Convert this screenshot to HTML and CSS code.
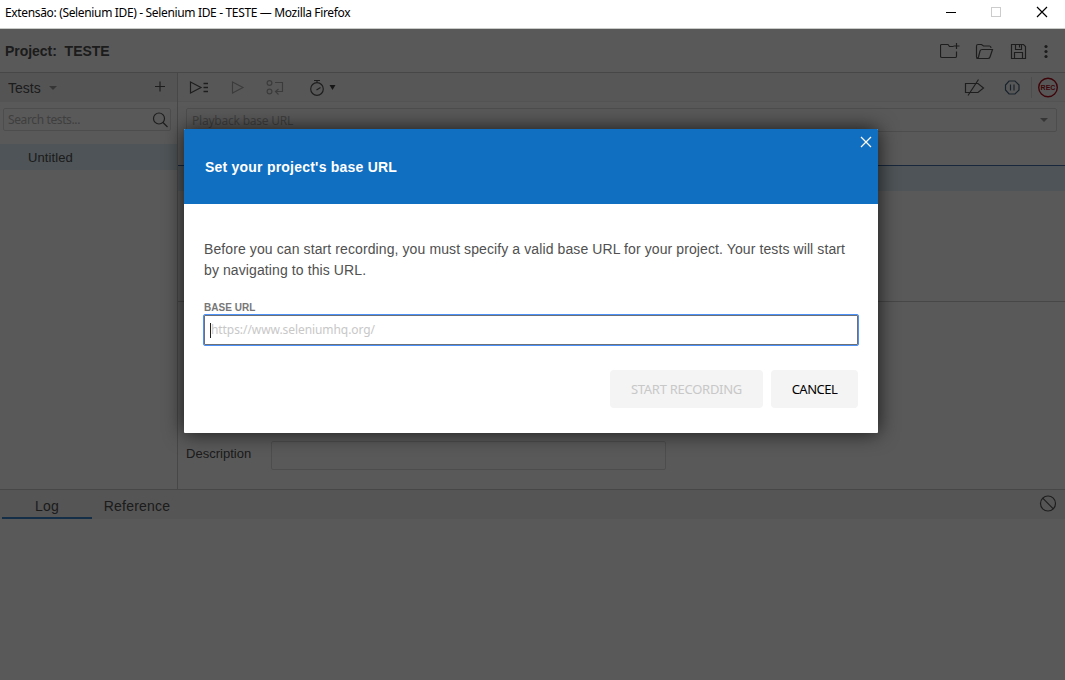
FILE: index.html
```html
<!DOCTYPE html>
<html lang="en">
<head>
<meta charset="utf-8">
<title>Selenium IDE - TESTE</title>
<link rel="stylesheet" href="styles.css">
</head>
<body>
<header class="titlebar">
  <span class="window-title">Extensão: (Selenium IDE) - Selenium IDE - TESTE — Mozilla Firefox</span>
  <svg class="window-controls" width="120" height="28" viewBox="0 0 120 28" fill="none" shape-rendering="crispEdges">
    <path d="M1 12.500H11" stroke="#000"/>
    <rect x="46.500" y="7.500" width="9" height="9" stroke="#ccc"/>
    <path d="M92 7L102 17M102 7L92 17" stroke="#000" stroke-width="1.200" shape-rendering="auto"/>
  </svg>
</header>
<div class="app">
  <div class="project">
    <span class="project-name">Project:&nbsp; TESTE</span>
    <svg width="120" height="24" viewBox="0 0 120 24" class="line-icons project-icons">
      <path d="M13.500 5.500H9.500L8 3.500H1.500Q.5 3.500 .5 5V15.500Q.5 16.500 2 16.500H15.500Q16.500 16.500 16.500 15V10.500M16.500 2V8M13.500 5H19.500"/>
      <path d="M36.500 16V5Q36.500 3.500 38 3.500H41.500L43.500 5H49.500Q51 5 51 7M38 17.500H48Q49.500 17.500 50 16L52.500 8.500H42Q40.500 8.500 40 10L38.500 16Q38 17.500 37 17.500L36.500 16"/>
      <path d="M71.500 3.500H83.500L85.500 5.500V17.500H71.500ZM74.500 17V11.500H82.500V17M75.500 4V8.500H81.500V4M79.500 4V6.500"/>
      <g class="dots"><circle cx="106" cy="5.500" r="1.600"/><circle cx="106" cy="10.500" r="1.600"/><circle cx="106" cy="15.500" r="1.600"/></g>
    </svg>
  </div>
  <div class="workspace">
    <aside class="sidebar">
      <div class="tests-head">
        <span>Tests</span><i class="caret"></i>
        <svg class="line-icons add" width="12" height="12" viewBox="0 0 12 12"><path d="M1 5.500H11M6 .5V10.500"/></svg>
      </div>
      <div class="search"><span class="search-hint">Search tests...</span>
        <svg class="line-icons" width="18" height="18" viewBox="0 0 18 18"><circle cx="7" cy="7.500" r="5.500"/><path d="M11 11.500L15.500 16"/></svg>
      </div>
      <div class="test-item">Untitled</div>
    </aside>
    <main class="editor">
      <div class="toolbar">
        <svg class="line-icons" width="160" height="28" viewBox="0 0 160 28">
          <path d="M2.500 9L13 14.500L2.500 20Z"/><path d="M15.500 10.500H20M15.500 14.500H20M15.500 18.500H20" stroke-width="1.500"/>
          <g class="disabled"><path d="M44.500 9L55 14.500L44.500 20Z"/><circle cx="81.500" cy="10" r="2.400"/><circle cx="81.500" cy="18.500" r="2.400"/><path d="M87 9.500H94.500V18.500H87.500M90.500 16L87.500 18.500L90.500 21.500"/></g>
          <circle cx="129" cy="16" r="6.300"/><path d="M126 7.500H132M129 8V9.500M128.500 17L132.500 14.500"/><path class="solid" d="M141.500 12H147.500L144.500 17Z"/>
        </svg>
        <svg class="line-icons" width="102" height="28" viewBox="0 0 102 28">
          <path d="M2.500 10.500H15L20.500 15L15 19.500H2.500ZM5 22.500L15.500 6.500"/>
          <path d="M46 8H52L56 12V17L52 21H46L42.500 17V12ZM47.500 11.500V17.500M51 11.500V17.500" class="pause"/>
          <path d="M68.500 4V25" class="divider"/>
          <circle cx="85" cy="14.500" r="9.300" class="record"/><text x="85" y="17" class="record-text">REC</text>
        </svg>
      </div>
      <div class="playback"><span class="playback-hint">Playback base URL</span><i class="caret"></i></div>
      <div class="commands"><div class="command-row"></div></div>
      <div class="details"><label class="description">Description</label><div class="description-input"></div></div>
    </main>
  </div>
  <nav class="tabs"><div class="tab active">Log</div><div class="tab reference">Reference</div>
    <svg class="line-icons" width="18" height="18" viewBox="0 0 18 18"><circle cx="9" cy="9.500" r="7.500"/><path d="M3.700 4.200L14.300 14.800"/></svg>
  </nav>
  <div class="log"></div>
  <div class="overlay">
    <section class="dialog">
      <div class="dialog-head"><h1>Set your project's base URL</h1>
        <svg class="close" width="12" height="12" viewBox="0 0 12 12"><path d="M1 1L11 11M11 1L1 11"/></svg>
      </div>
      <div class="dialog-body">
        <p>Before you can start recording, you must specify a valid base URL for your project. Your tests will start<br>by navigating to this URL.</p>
        <label class="field-label">BASE URL</label>
        <div class="url-input"><i class="cursor"></i><span class="url-hint">https://www.seleniumhq.org/</span></div>
        <div class="actions"><button class="start" disabled><span>START RECORDING</span></button><button class="cancel"><span>CANCEL</span></button></div>
      </div>
    </section>
  </div>
</div>
</body>
</html>
```
FILE: styles.css
```css
* { box-sizing: border-box; }
body { margin: 0; width: 1065px; height: 680px; overflow: hidden; background: #fff; font: 14px/20px "Liberation Sans", Arial, sans-serif; color: #505050; }
svg { display: block; flex: none; }
.titlebar { height: 29px; border-bottom: 1px solid #c9cbc9; display: flex; justify-content: space-between; }
.window-title { font: 12px/17px "Noto Sans", sans-serif; letter-spacing: -.345px; color: #000; padding: 4px 0 0 5px; white-space: nowrap; }
.app { position: relative; height: 651px; display: flex; flex-direction: column; }
.project { height: 44px; flex: none; border-bottom: 1px solid #ccc; display: flex; align-items: center; justify-content: space-between; padding-left: 5px; }
.project-name { font-weight: bold; font-size: 14px; letter-spacing: -.03px; }
.project-icons { margin: 4px 5px 0 0; }
.line-icons { fill: none; stroke: #555; stroke-width: 1.2; }
.dots { fill: #505050; stroke: none; }
.workspace { height: 416px; flex: none; display: flex; }
.sidebar { width: 178px; border-right: 1px solid #ccc; }
.tests-head { height: 29px; background: #f0f0f0; display: flex; align-items: center; padding: 1px 11px 0 8px; }
.caret { border: 4px solid transparent; border-top-color: #999; border-bottom: 0; margin-left: 8px; }
.tests-head .add { margin-left: auto; margin-bottom: 2px; }
.search { margin: 6px 6px 0 3px; height: 23px; border: 1px solid #ddd; border-radius: 2px; display: flex; align-items: center; justify-content: space-between; padding-left: 4px; font: 12px/18px "Noto Sans", sans-serif; letter-spacing: -.38px; color: #b4b4b4; }
.search-hint { padding-top: 1px; }
.test-item { height: 26px; margin-top: 13px; padding: 4px 0 0 28px; background: #dff0f9; font-size: 13px; letter-spacing: .1px; }
.editor { flex: 1; display: flex; flex-direction: column; }
.toolbar { height: 29px; flex: none; background: #fafafa; border-bottom: 1px solid #eee; display: flex; justify-content: space-between; padding-left: 10px; }
.disabled { stroke: #aaa; }
.solid { fill: #404040; stroke: none; }
.pause { stroke: #47637e; }
.divider { stroke: #ddd; stroke-width: 1; }
.record { stroke: #b0101c; stroke-width: 1.4; }
.record-text { fill: #b0101c; stroke: none; font: bold 7px "Liberation Sans", sans-serif; text-anchor: middle; }
.playback { height: 24px; margin: 6px 8px 0; flex: none; border: 1px solid #ddd; border-radius: 2px; display: flex; align-items: center; justify-content: space-between; padding: 0 8px 0 5px; font: 12px/20px "Noto Sans", sans-serif; letter-spacing: -.22px; color: #b4b4b4; }
.playback-hint { padding-top: 1px; }
.commands { margin-top: 33px; height: 137px; flex: none; border-top: 1px solid #4671ac; border-bottom: 1px solid #ccc; }
.command-row { height: 25px; background: #dff0f9; }
.details { display: flex; padding: 139px 0 0 8px; }
.description { width: 85px; padding-top: 3px; font-size: 13px; letter-spacing: .02px; }
.description-input { width: 395px; height: 29px; border: 1px solid #ddd; border-radius: 2px; }
.tabs { height: 30px; flex: none; border-top: 1px solid #ccc; background: #f3f3f3; display: flex; padding: 0 8px 0 2px; align-items: center; }
.tab { height: 29px; width: 90px; text-align: center; font-size: 14px; letter-spacing: .2px; line-height: 32px; }
.active { border-bottom: 2px solid #3d84ca; }
.reference { border-bottom: 2px solid transparent; }
.tabs svg { margin: 0 0 3px auto; }
.log { flex: 1; }
.overlay { position: absolute; inset: 0; background: rgba(0, 0, 0, .65); display: flex; justify-content: center; align-items: flex-start; padding: 100px 3px 0 0; }
.dialog { width: 694px; height: 304px; border-radius: 1px; background: #fff; box-shadow: 0 0 20px rgba(0, 0, 0, .75); overflow: hidden; }
.dialog-head { height: 75px; background: #106fc1; color: #fff; display: flex; justify-content: space-between; padding: 8px 6px 0 21px; }
.dialog-head h1 { font-size: 14px; line-height: 20px; margin: 20px 0 0; letter-spacing: .22px; }
.close { stroke: #fff; stroke-width: 1.2; margin-top: -1px; }
.dialog-body { padding: 35px 20px 0; display: flex; flex-direction: column; }
.dialog-body p { margin: 0; font-size: 14px; line-height: 21px; letter-spacing: .1px; white-space: nowrap; }
.field-label { font-size: 10px; line-height: 12px; font-weight: bold; letter-spacing: .03px; color: #777; margin-top: 21px; }
.url-input { height: 32px; margin: 0 -1px; border: 1px solid #4c91f7; border-radius: 2px; box-shadow: inset 0 0 0 1px #6c7077; display: flex; align-items: center; padding-left: 6px; font: 12px/20px "Noto Sans", sans-serif; letter-spacing: -.07px; color: #c8c8c8; }
.cursor { width: 1px; height: 15px; background: #222; }
.actions { display: flex; justify-content: flex-end; gap: 8px; margin-top: 24px; }
button { height: 38px; padding: 0; border: 0; border-radius: 4px; background: #f4f4f4; font: 13px/20px "Noto Sans", sans-serif; }
.start { width: 153px; color: #c8c8c8; letter-spacing: -.27px; }
.cancel { width: 87px; color: #000; letter-spacing: -.5px; }
```
